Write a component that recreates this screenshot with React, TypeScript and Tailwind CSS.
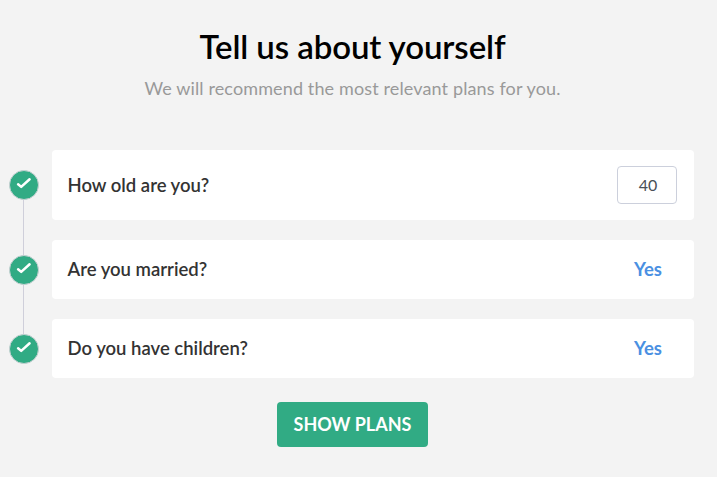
import { useState } from "react";

function CheckBadge() {
  return (
    <span className="z-10 flex size-[30px] shrink-0 items-center justify-center rounded-full border border-[#c6d0d2] bg-[#31ab84]">
      <svg
        className="mb-[3px]"
        width="16"
        height="13"
        viewBox="0 0 16 13"
        fill="none"
      >
        <path
          d="M2.1 7.3L5.2 9.9L13.6 2.3"
          stroke="#fff"
          strokeWidth="2.5"
          strokeLinecap="round"
          strokeLinejoin="round"
        />
      </svg>
    </span>
  );
}

const questions = ["Are you married?", "Do you have children?"];

export default function App() {
  const [age, setAge] = useState("40");
  const [answers, setAnswers] = useState<boolean[]>([true, true]);

  const toggleAnswer = (index: number) => {
    setAnswers((prev) => prev.map((ele, i) => (i === index ? !ele : ele)));
  };

  return (
    <main className="flex h-screen flex-col overflow-hidden bg-[#f3f3f3] pt-[25px] font-['Lato',sans-serif]">
      <header className="pr-3 text-center">
        <h1 className="text-[33px] leading-[42px] font-semibold tracking-[-0.1px] text-black">
          Tell us about yourself
        </h1>
        <p className="mt-[9px] text-lg leading-6 tracking-[0.13px] text-[#999]">
          We will recommend the most relevant plans for you.
        </p>
      </header>
      <form
        className="mt-[50px] flex flex-col"
        onSubmit={(e) => e.preventDefault()}
      >
        <div className="relative flex flex-col gap-5 pr-[23px] pl-[9px]">
          <div className="absolute top-9 bottom-8 left-[23px] w-px bg-[#cfcfda]" />
          <div className="flex items-center gap-[13px]">
            <CheckBadge />
            <label className="flex h-[70px] flex-1 items-center justify-between rounded-[4px] bg-white pr-[17px] pl-[15.5px] text-[18.5px] font-semibold text-[#333]">
              <span className="pt-0.5">How old are you?</span>
              <input
                type="text"
                value={age}
                className="h-[38px] w-[60px] rounded-[4px] border border-[#ccd0dc] pb-0.5 pl-0.5 text-center text-base font-normal text-[#495057]"
                onChange={(e) => setAge(e.target.value)}
              />
            </label>
          </div>
          {questions.map((question, index) => (
            <div key={question} className="flex items-center gap-[13px]">
              <CheckBadge />
              <div className="flex h-[59px] flex-1 items-center justify-between rounded-[4px] bg-white pr-8 pl-[15.5px] text-[18.5px] font-semibold text-[#333]">
                <p>{question}</p>
                <button
                  type="button"
                  className="font-bold text-[#4a90e2]"
                  onClick={() => toggleAnswer(index)}
                >
                  {answers[index] ? "Yes" : "No"}
                </button>
              </div>
            </div>
          ))}
        </div>
        <button
          type="submit"
          className="mt-6 ml-[277px] h-[45px] w-[151px] rounded-[4px] bg-[#31ab84] pb-0.5 text-lg font-bold text-white"
        >
          SHOW PLANS
        </button>
      </form>
    </main>
  );
}
